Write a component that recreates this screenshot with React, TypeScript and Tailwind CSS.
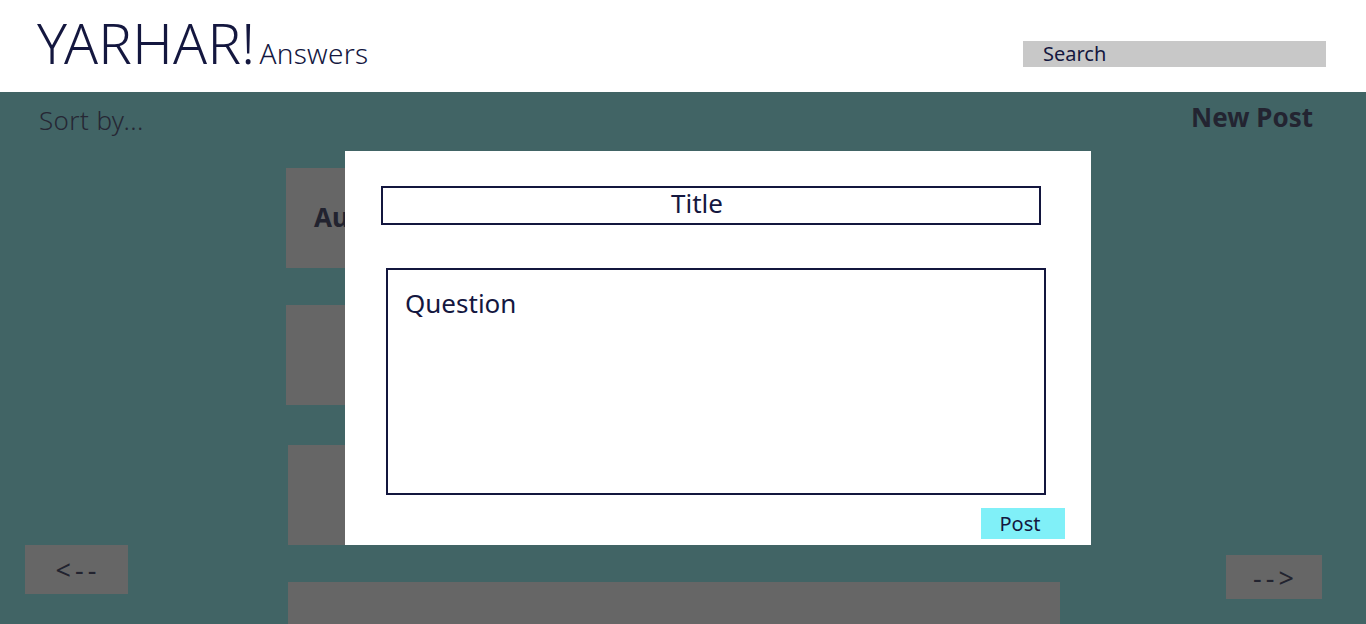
const cards = [
  { key: "a", className: "ml-0 w-[774px] h-[100px]", label: "Author" },
  { key: "b", className: "ml-0 w-[774px] h-[100px] mt-[37px]", label: "" },
  { key: "c", className: "ml-[2px] w-[772px] h-[100px] mt-[40px]", label: "" },
  { key: "d", className: "ml-[2px] w-[772px] h-[100px] mt-[37px]", label: "" },
];

export default function App() {
  return (
    <div className="relative h-[624px] overflow-hidden bg-[#416465] font-['Noto_Sans',sans-serif] text-[#22232f]">
      {/* Header */}
      <header className="h-[92px] bg-white flex items-end justify-between pb-[22px] pl-[37px] pr-[40px] text-[#14173f]">
        <div className="flex items-baseline">
          <span className="text-[56px] font-light leading-none tracking-[0.3px]">YARHAR!</span>
          <span className="ml-[4px] text-[28px] font-light leading-none tracking-[0.3px]">Answers</span>
        </div>
        <div className="mb-[3px] w-[303px] h-[26px] bg-[#c8c8c8] pl-[20px] flex items-center text-[20px] leading-none">
          Search
        </div>
      </header>

      {/* Body */}
      <div className="flex">
        <div className="w-[286px] shrink-0 flex flex-col">
          <div className="pl-[39px] pt-[12px] text-[26px] font-light leading-[32px] tracking-[0.4px] text-[#262734]">
            Sort by...
          </div>
          <button className="ml-[25px] mt-[409px] w-[103px] h-[49px] bg-[#666666] flex items-center justify-center pl-[3px] text-[27px] leading-none text-[#22232f] tracking-[4px]">
            &lt;--
          </button>
        </div>

        <div className="w-[774px] shrink-0 pt-[76px] flex flex-col">
          {cards.map((c) => (
            <div key={c.key} className={`${c.className} bg-[#666666] shrink-0 flex items-center pl-[28px]`}>
              {c.label && <span className="text-[26px] font-bold text-[#22232f] -mt-[2px]">{c.label}</span>}
            </div>
          ))}
        </div>

        <div className="flex-1 flex flex-col items-end pr-[44px]">
          <div className="pt-[8px] pr-[9px] text-[26px] font-bold leading-[34px] text-[#232431]">New Post</div>
          <button className="mt-[421px] w-[96px] h-[44px] bg-[#666666] flex items-center justify-center pl-[3px] text-[27px] leading-none text-[#22232f] tracking-[4px]">
            --&gt;
          </button>
        </div>
      </div>

      {/* Modal */}
      <div className="absolute left-[345px] top-[151px] w-[746px] h-[394px] bg-white flex flex-col text-[#14173f]">
        <div className="ml-[36px] mt-[35px] w-[660px] h-[39px] border-2 border-[#13163e] flex items-center justify-center pr-[28px] pb-[6px] text-[26px] leading-none">
          Title
        </div>
        <div className="ml-[41px] mt-[43px] w-[660px] h-[227px] border-2 border-[#13163e] pl-[17px] pt-[17px] text-[26px] leading-[32px]">
          Question
        </div>
        <div className="flex justify-end pr-[26px] mt-[13px]">
          <button className="w-[84px] h-[31px] bg-[#80f0f8] flex items-center justify-center pr-[6px] text-[20px] leading-none text-[#14173f]">
            Post
          </button>
        </div>
      </div>
    </div>
  );
}
